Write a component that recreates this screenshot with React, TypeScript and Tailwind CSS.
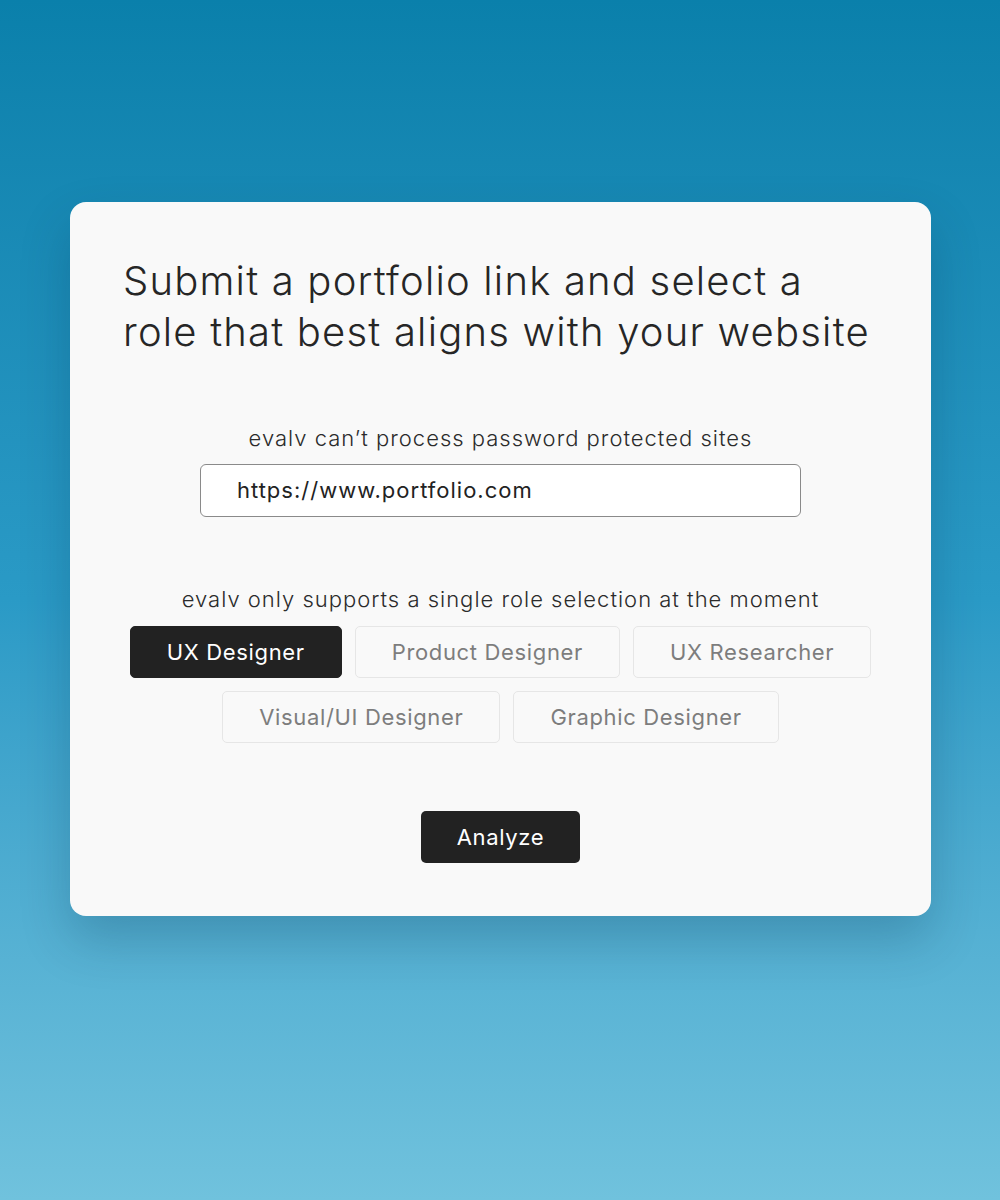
const roles = ['UX Designer', 'Product Designer', 'UX Researcher', 'Visual/UI Designer', 'Graphic Designer']

function RoleButton({ label, active }: { label: string; active: boolean }) {
  return (
    <button
      className={`h-[52px] px-9 rounded-[5px] text-[22px] tracking-[0.65px] border ${
        active ? 'bg-[#222222] border-[#222222] text-white' : 'bg-[#f9f9f9] border-[#e6e6e6] text-[#7d7d7d]'
      }`}
    >
      {label}
    </button>
  )
}

export default function App() {
  const selected = 'UX Designer'

  return (
    <div
      className="min-h-[1200px] w-full bg-gradient-to-b from-[#0a80ab] via-[#2a9ac6] to-[#70c2dd] pt-[202px] px-[70px]"
      style={{ fontFamily: 'Inter, "Noto Sans", sans-serif' }}
    >
      <div className="w-[861px] h-[714px] bg-[#f9f9f9] rounded-[16px] shadow-[0_24px_50px_rgba(0,40,70,0.22)] pt-[53px] px-[53px]">
        <h1 className="text-[40px] leading-[51px] font-light text-[#262626] tracking-[1.2px] whitespace-nowrap">
          Submit a portfolio link and select a
          <br />
          role that best aligns with your website
        </h1>

        <div className="mt-[66px] flex flex-col items-center">
          <p className="text-[22px] leading-[30px] font-light text-[#2b2b2b] tracking-[1px]">evalv can’t process password protected sites</p>
          <div className="mt-[11px] w-[601px] h-[53px] bg-white border border-[#8a8a8a] rounded-[6px] flex items-center pl-9 text-[22px] text-[#222222] tracking-[1px]">
            https://www.portfolio.com
          </div>
        </div>

        <div className="mt-[67px] flex flex-col items-center">
          <p className="text-[22px] leading-[30px] font-light text-[#2b2b2b] tracking-[1px]">evalv only supports a single role selection at the moment</p>
          <div className="mt-[12px] flex flex-wrap justify-center gap-[13px] w-[760px]">
            {roles.map((r) => (
              <RoleButton key={r} label={r} active={r === selected} />
            ))}
          </div>
          <button className="mt-[68px] h-[52px] px-9 rounded-[5px] bg-[#222222] text-white text-[22px] tracking-[0.65px]">Analyze</button>
        </div>
      </div>
    </div>
  )
}
